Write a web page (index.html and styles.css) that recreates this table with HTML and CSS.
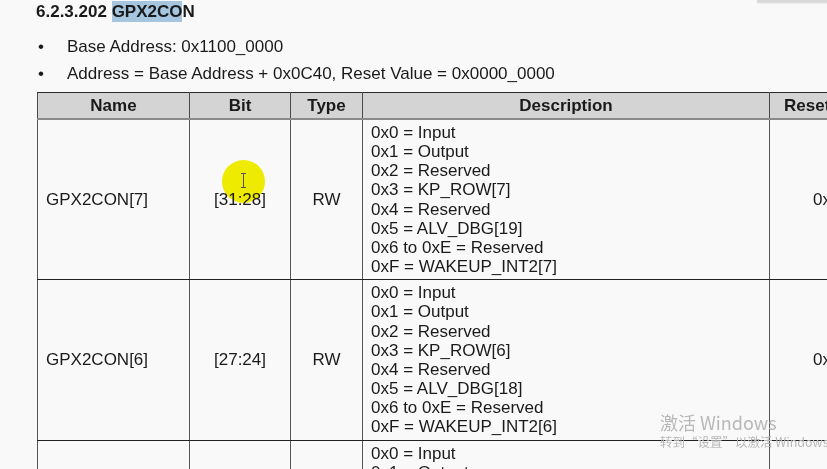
FILE: index.html
```html
<!DOCTYPE html>
<html>
<head>
<meta charset="utf-8">
<link rel="stylesheet" href="styles.css">
</head>
<body>
<div class="page">
  <div class="topbar"></div>
  <h1 class="title">6.2.3.202 <span class="sel">GPX2CO</span>N</h1>
  <ul class="bullets">
    <li><span class="dot">•</span><span>Base Address: 0x1100_0000</span></li>
    <li><span class="dot">•</span><span>Address = Base Address + 0x0C40, Reset Value = 0x0000_0000</span></li>
  </ul>
  <table class="reg">
    <colgroup>
      <col class="c-name"><col class="c-bit"><col class="c-type"><col class="c-desc"><col class="c-reset">
    </colgroup>
    <thead>
      <tr><th>Name</th><th>Bit</th><th>Type</th><th>Description</th><th class="left">Reset Value</th></tr>
    </thead>
    <tbody>
      <tr>
        <td class="name">GPX2CON[7]</td>
        <td class="center">[31:28]</td>
        <td class="center">RW</td>
        <td class="desc">0x0 = Input<br>0x1 = Output<br>0x2 = Reserved<br>0x3 = KP_ROW[7]<br>0x4 = Reserved<br>0x5 = ALV_DBG[19]<br>0x6 to 0xE = Reserved<br>0xF = WAKEUP_INT2[7]</td>
        <td class="reset">0x00</td>
      </tr>
      <tr>
        <td class="name">GPX2CON[6]</td>
        <td class="center">[27:24]</td>
        <td class="center">RW</td>
        <td class="desc">0x0 = Input<br>0x1 = Output<br>0x2 = Reserved<br>0x3 = KP_ROW[6]<br>0x4 = Reserved<br>0x5 = ALV_DBG[18]<br>0x6 to 0xE = Reserved<br>0xF = WAKEUP_INT2[6]</td>
        <td class="reset">0x00</td>
      </tr>
      <tr>
        <td class="name">GPX2CON[5]</td>
        <td class="center">[23:20]</td>
        <td class="center">RW</td>
        <td class="desc">0x0 = Input<br>0x1 = Output<br>0x2 = Reserved<br>0x3 = KP_ROW[5]<br>0x4 = Reserved<br>0x5 = ALV_DBG[17]<br>0x6 to 0xE = Reserved<br>0xF = WAKEUP_INT2[5]</td>
        <td class="reset">0x00</td>
      </tr>
    </tbody>
  </table>
  <div class="cursor"><span class="ibeam"></span></div>
  <div class="watermark">
    <div class="wm1">激活 Windows</div>
    <div class="wm2">转到“设置”以激活 Windows。</div>
  </div>
</div>
</body>
</html>
```
FILE: styles.css
```css
html, body {
  margin: 0;
  padding: 0;
  background: #f9f9f9;
  overflow: hidden;
}
.page {
  position: relative;
  width: 827px;
  height: 469px;
  overflow: hidden;
  font-family: "Liberation Sans", Arial, sans-serif;
  color: #1a1a1a;
}
.topbar {
  position: absolute;
  top: 0;
  left: 757px;
  width: 80px;
  height: 2px;
  background: #d8d8d8;
  box-shadow: 0 1px 2px rgba(0,0,0,0.15);
}
.title {
  margin: 0;
  padding: 2px 0 0 36px;
  font-size: 17px;
  font-weight: bold;
  line-height: 19px;
  height: 20px;
}
.sel {
  background: #a6c6e0;
  padding: 1px 0;
}
.bullets {
  list-style: none;
  margin: 0;
  padding: 0 0 0 36px;
  font-size: 17px;
}
.bullets li {
  display: flex;
  height: 27px;
  align-items: center;
}
.bullets li:first-child { margin-top: 11px; }
.dot {
  width: 29px;
  font-size: 17px;
  padding-left: 2px;
}
.reg {
  margin: 5px 0 0 37px;
  border-collapse: collapse;
  table-layout: fixed;
  width: 880px;
  font-size: 17px;
}
.c-name { width: 152px; }
.c-bit { width: 101px; }
.c-type { width: 72px; }
.c-desc { width: 407px; }
.c-reset { width: 148px; }
.reg th {
  background: #d4d4d4;
  font-weight: bold;
  height: 25px;
  padding: 0;
  border: 1px solid #4a4a4a;
  border-top: 1px solid #2a2a2a;
  border-bottom: 2px solid #8a8a8a;
  text-align: center;
}
.reg th.left { text-align: left; padding-left: 14px; }
.reg td {
  border: 1px solid #555;
  border-top: 1px solid #222;
  border-bottom: 1px solid #222;
  padding: 0;
  vertical-align: middle;
}
.reg td.name { padding-left: 8px; }
.reg td.center { text-align: center; }
.reg td.desc {
  padding: 3px 8px 3px 8px;
  line-height: 19.15px;
}
.reg td.reset { padding-left: 43px; }
.cursor {
  position: absolute;
  left: 222px;
  top: 160px;
  width: 43px;
  height: 43px;
  border-radius: 50%;
  background: #f4f000;
  mix-blend-mode: multiply;
}
.ibeam {
  position: absolute;
  left: 21px;
  top: 13px;
  width: 1px;
  height: 15px;
  background: #555;
}
.ibeam::before, .ibeam::after {
  content: "";
  position: absolute;
  left: -2px;
  width: 5px;
  height: 1px;
  background: #555;
}
.ibeam::before { top: 0; }
.ibeam::after { bottom: 0; }
.watermark {
  position: absolute;
  left: 660px;
  top: 411px;
  color: #b8b8b8;
  font-family: "Noto Sans CJK SC", "Noto Sans", sans-serif;
  white-space: nowrap;
}
.wm1 { font-size: 18px; line-height: 23px; }
.wm2 { font-size: 12.5px; line-height: 15px; }
```
